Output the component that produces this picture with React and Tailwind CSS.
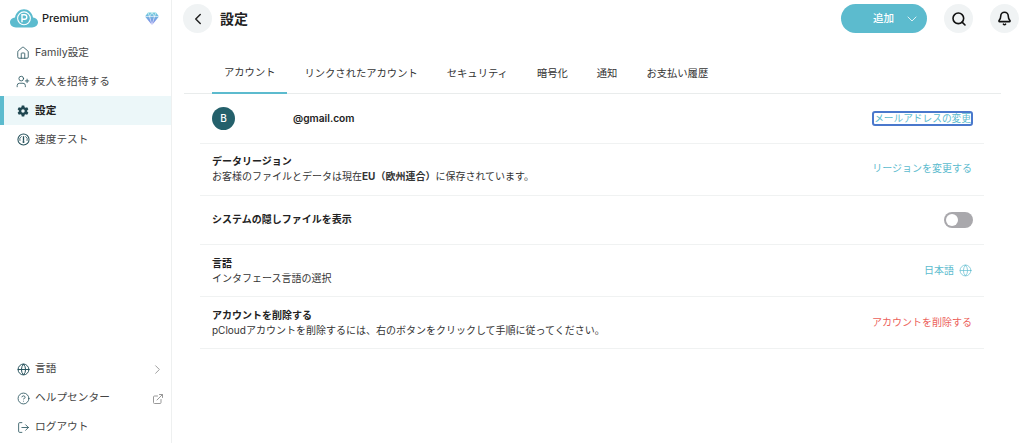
import { ChevronLeft, ChevronDown, ChevronRight, Search, Bell, House, UserPlus, Globe, CircleHelp, ExternalLink, LogOut } from "lucide-react";

const font = { fontFamily: '"Inter", "Noto Sans CJK JP", sans-serif' };

const tabs = ["アカウント", "リンクされたアカウント", "セキュリティ", "暗号化", "通知", "お支払い履歴"];

export default function App() {
  return (
    <div style={font} className="flex h-[443px] w-[1024px] overflow-hidden bg-white text-[#222]">
      <Sidebar />
      <main className="flex min-w-0 flex-1 flex-col">
        <header className="mt-[4px] flex h-[29px] items-center pl-[11px] pr-[5px]">
          <button className="flex size-[29px] items-center justify-center rounded-full bg-[#f0f3f4]">
            <ChevronLeft size={18} strokeWidth={2} className="text-[#222]" />
          </button>
          <h1 className="ml-[8px] text-[14px] font-semibold leading-none">設定</h1>
          <div className="flex-1" />
          <button className="flex h-[29px] w-[86px] items-center rounded-full bg-[#5cbbce] pl-[32px] text-[10.5px] font-medium text-white">
            追加
            <ChevronDown size={16} strokeWidth={1.5} className="ml-[10px] text-white/80" />
          </button>
          <button className="ml-[17px] flex size-[29px] items-center justify-center rounded-full bg-[#f0f3f4]">
            <Search size={16} strokeWidth={2.4} className="text-[#111]" />
          </button>
          <button className="ml-[17px] flex size-[29px] items-center justify-center rounded-full bg-[#f0f3f4]">
            <Bell size={15} strokeWidth={2.5} className="text-[#111]" />
          </button>
        </header>

        <div className="ml-[12px] mr-[23px] mt-[21px] flex h-[40px] gap-[5px] border-b border-[#e9ecec] pl-[28px] text-[10.3px] text-[#333]">
          {tabs.map((t, i) => (
            <div key={t} className={`-mb-px flex items-center justify-center px-[12px] ${i === 0 ? "border-b-2 border-[#5cbbce]" : ""}`}>
              {t}
            </div>
          ))}
        </div>

        <div className="ml-[28px] mr-[40px] flex flex-col">
          <Row h="h-[50px]">
            <div className="flex items-center">
              <div className="flex size-[23px] items-center justify-center rounded-full bg-[#24606b] text-[10px] font-medium text-white">B</div>
              <span className="ml-[58px] text-[10.2px] font-semibold">@gmail.com</span>
            </div>
            <span className="-mr-[1px] rounded-[3px] border-2 border-[#4a78cc] text-[9.7px] leading-[11px] text-[#5cbbce]">メールアドレスの変更</span>
          </Row>
          <Row h="h-[52px]">
            <div className="-mt-[2px]">
              <div className="text-[10px] font-semibold leading-[15px]">データリージョン</div>
              <div className="text-[10px] leading-[14px] text-[#333]">
                お客様のファイルとデータは現在<b>EU（欧州連合）</b>に保存されています。
              </div>
            </div>
            <span className="pb-[2px] text-[10px] text-[#5cbbce]">リージョンを変更する</span>
          </Row>
          <Row h="h-[49px]">
            <div className="pb-[2px] text-[10px] font-semibold">システムの隠しファイルを表示</div>
            <div className="-mr-[1px] flex h-[16px] w-[29px] items-center rounded-full bg-[#a9a8ac] pl-[2px]">
              <div className="size-[12px] rounded-full bg-white" />
            </div>
          </Row>
          <Row h="h-[52px]">
            <div>
              <div className="text-[10px] font-semibold leading-[15px]">言語</div>
              <div className="text-[10px] leading-[14px] text-[#333]">インタフェース言語の選択</div>
            </div>
            <span className="flex items-center gap-[5px] text-[10px] text-[#5cbbce]">
              日本語
              <Globe size={13} strokeWidth={1.25} />
            </span>
          </Row>
          <Row h="h-[52px]">
            <div>
              <div className="text-[10px] font-semibold leading-[15px]">アカウントを削除する</div>
              <div className="text-[10px] leading-[14px] text-[#333]">pCloudアカウントを削除するには、右のボタンをクリックして手順に従ってください。</div>
            </div>
            <span className="text-[10px] text-[#ec5f5a]">アカウントを削除する</span>
          </Row>
        </div>
      </main>
    </div>
  );
}

function Row({ h, children }) {
  return <div className={`${h} flex items-center justify-between border-b border-[#f0f2f2] px-[12px]`}>{children}</div>;
}

function Sidebar() {
  return (
    <aside className="flex w-[172px] shrink-0 flex-col border-r border-[#eef0f0]">
      <div className="flex h-[38px] items-center pb-[2px] pl-[10px] pr-[12px]">
        <Logo />
        <span className="ml-[4px] text-[11px] font-medium">Premium</span>
        <div className="flex-1" />
        <Diamond />
      </div>
      <nav className="flex flex-col">
        <Item nudge icon={<House size={14} strokeWidth={1.4} />} label="Family設定" />
        <Item nudge icon={<UserPlus size={15} strokeWidth={1.4} />} label="友人を招待する" />
        <Item nudge icon={<Gear />} label="設定" active />
        <Item nudge icon={<SpeedIcon />} label="速度テスト" />
      </nav>
      <div className="mb-[1px] mt-auto flex flex-col">
        <Item icon={<Globe size={13} strokeWidth={1.8} />} label="言語" trailing={<ChevronRight size={15} strokeWidth={1.5} className="-mr-[2px] text-[#999]" />} />
        <Item icon={<CircleHelp size={13} strokeWidth={1.5} />} label="ヘルプセンター" trailing={<ExternalLink size={12} className="-mr-[1px] text-[#999]" />} />
        <Item icon={<LogOut size={13} strokeWidth={1.5} />} label="ログアウト" />
      </div>
    </aside>
  );
}

function Item({ icon, label, active, trailing, nudge }) {
  return (
    <div className={`flex h-[29px] items-center pr-[8px] text-[10.7px] ${active ? "border-l-[4px] border-[#5cbbce] bg-[#ecf7f9] pl-[12px] font-semibold text-[#222]" : "pl-[16px] text-[#444]"}`}>
      <span className="flex w-[14px] justify-center text-[#24505a]">{icon}</span>
      <span className={`ml-[5px] ${nudge ? "pt-[2px]" : ""}`}>{label}</span>
      {trailing && <span className="ml-auto">{trailing}</span>}
    </div>
  );
}

function Gear() {
  return (
    <svg width="12" height="12" viewBox="0 0 24 24" fill="#1f4650">
      <path fillRule="evenodd" d="M9.500 1h5l.7 3.300 1.900 1.100 3.200-1.100 2.500 4.400-2.500 2.200v2.200l2.500 2.200-2.500 4.400-3.200-1.100-1.900 1.100-.7 3.300h-5l-.7-3.300-1.900-1.100-3.200 1.100L1.200 15.300l2.500-2.200v-2.200L1.200 8.700l2.500-4.400 3.200 1.100 1.900-1.100ZM12 8.500a3.500 3.500 0 1 0 0 7 3.500 3.500 0 0 0 0-7Z" />
    </svg>
  );
}

function SpeedIcon() {
  return (
    <svg width="13" height="13" viewBox="0 0 14 14" fill="none" stroke="#24505a" strokeWidth="1.1">
      <circle cx="7" cy="7" r="6" />
      <path d="M7 3.500v5" strokeWidth="1.400" />
      <path d="M3.200 8.500A4 4 0 0 1 5 3.600M10.800 8.500A4 4 0 0 0 9 3.600" strokeWidth="0.9" />
      <circle cx="7" cy="9.600" r="1.100" fill="#24505a" stroke="none" />
    </svg>
  );
}

function Logo() {
  return (
    <svg width="28" height="19" viewBox="0 0 28 19">
      <path d="M6 18.500C2.700 18.500 0 16.300 0 13.300 0 10.600 2.200 8.600 5 8.400 6 3.500 9.500.3 14 .3c4.500 0 8 3.200 9 8.100 2.800.2 5 2.200 5 4.900 0 3-2.700 5.200-6 5.200Z" fill="#5cbbce" />
      <circle cx="14" cy="9.300" r="6.400" fill="none" stroke="#fff" strokeWidth="1.100" />
      <path d="M12 13.300V5.800h2.600a2.200 2.200 0 0 1 0 4.400H12" fill="none" stroke="#fff" strokeWidth="1.400" />
    </svg>
  );
}

function Diamond() {
  return (
    <svg width="14" height="15" viewBox="0 0 14 14">
      <defs>
        <linearGradient id="gem" x1="0" y1="0" x2="0" y2="1">
          <stop offset="0" stopColor="#6fd0dc" />
          <stop offset="1" stopColor="#7f7de8" />
        </linearGradient>
      </defs>
      <path d="M3 1h8l3 4-7 8.500L0 5Z" fill="url(#gem)" />
      <path d="M0 5h14M4.500 5 7 13.500 9.500 5M3 1l1.500 4L7 1l2.500 4L11 1" fill="none" stroke="#fff" strokeWidth="0.6" />
    </svg>
  );
}
